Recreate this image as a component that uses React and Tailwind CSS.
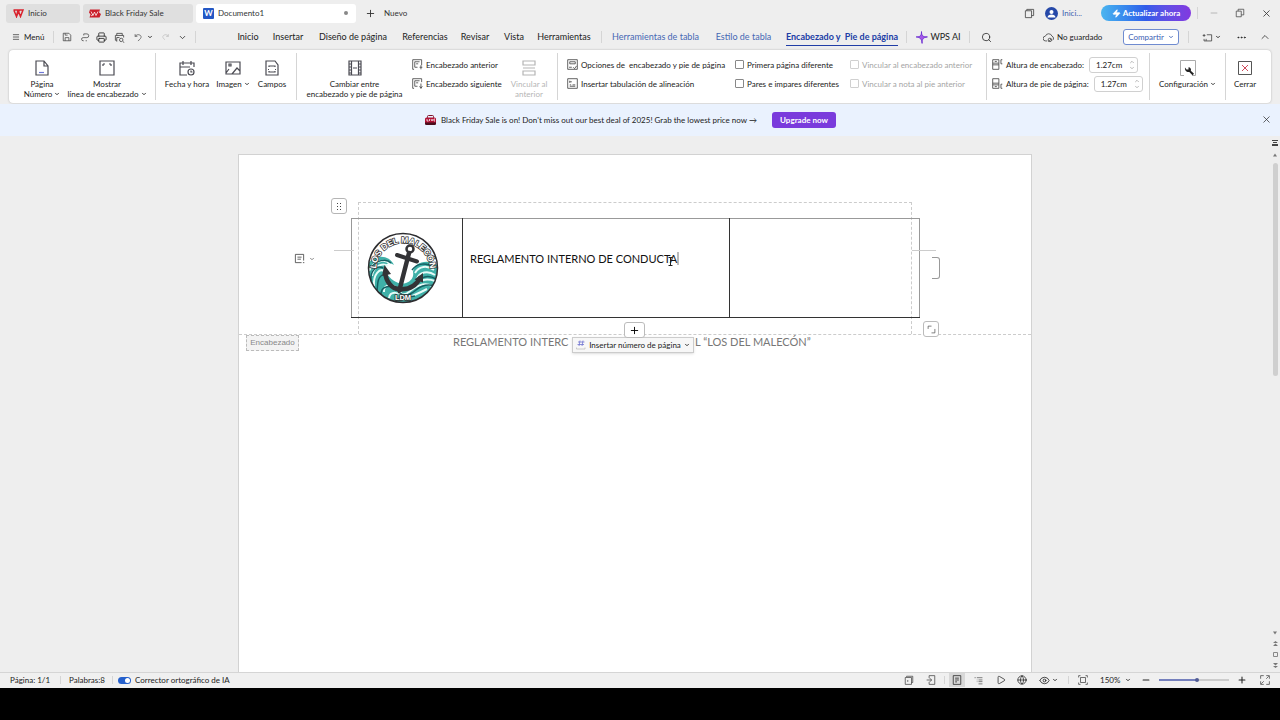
import { useState } from 'react';
import { Menu, Printer, ChevronDown, ChevronUp, Plus, Minus, X, Search, Play, Globe, Eye, Ellipsis, Zap } from 'lucide-react';

const paths = {
  save: 'M2 2h9l3 3v9H2zM5 14V9h6v5M5 2v3h4',
  exportPdf: 'M6 3h5a3 3 0 0 1 0 6H5a2.500 2.500 0 0 0 0 5h1M9 14h2M6 5.500V3',
  preview: 'M4 5V2h8v3M4 12H2V5h12v3M4 8h4M4 14V8M13 14l2 1.500M10.500 9a2.500 2.500 0 1 0 0 5 2.500 2.500 0 0 0 0-5',
  undo: 'M2 2v4h4M2 6c2-3 6-4 9-2s2 6-4 10',
  redo: 'M13 2v4H9M13 6C11 3 8 2 5 4S3 9 7 12',
  page: 'M2 1h8l4 5v9H2zM10 1v5h4',
  headerLine: 'M1 1h14v14H1zM4 4h2M10 4h2M4 6V4M12 6V4',
  calendar: 'M8 15H1V3h14v4M1 7h10M4 1v4M12 1v4M12 9a3 3 0 1 0 0 6 3 3 0 0 0 0-6M12 10.500V12h1.500',
  image: 'M1 2h14v12H1zM1 13l3-4M7 14l5-6 3 3M4 4h2v2H4z',
  field: 'M2 1h9l3 4v10H2zM5 7V6h6v1M5 11v1h6v-1M4 9.500h1M11 9.500h1',
  swap: 'M2 1h12v14H2zM4.500 1v14M11.500 1v14M2 4h2M2 7h2M2 10h2M2 13h2M12 4h2M12 7h2M12 10h2M12 13h2M6 8h4',
  link: 'M2 5V1h12v4zM2 8h12M2 11h12v4H2z',
  prev: 'M3 15H1V1h13v8M4 4h7M4 4v8h4M6 7h3M13 9v6M11 12h4',
  next: 'M3 15H1V1h13v5M4 4h7M4 4v8h4M6 7h3M13 8v7M11 12l2 3 2-3',
  options: 'M1 1h14v14H1zM4 4h8v3H4zM3 12h4M9 12l2 2 3-4',
  tabAlign: 'M1 1h14v14H1zM4 4v3M4 5.500h3M4 10h2M8 10h4M4 12h8',
  headHeight: 'M1 1h9v14H1zM1 6h9M4 3.500h3M1 8.500h9M15 1h-2v6h2',
  footHeight: 'M1 1h9v14H1zM1 10h9M4 12.500h3M1 7.500h9M15 9h-2v6h2',
  cloud: 'M6 13H4a3.500 3.500 0 0 1-.5-7A5 5 0 0 1 13 6a3.500 3.500 0 0 1 1 6M10 9a2 2 0 1 0 0 5 2 2 0 0 0 0-5M8 14l4-4',
  comment: 'M1 5h4M3 3v4M7 4h7v9H3v-3M6 10v3',
  window: 'M2 4h9v10H2zM4 4V2h10v9h-3',
  restore: 'M2 5h8v9H2zM5 5V2h9v9h-4',
  layout: 'M14 11V2H2v12h9M5 6h6M5 9h5M13 14h2',
  nav: 'M5 5V1h9v14H5v-4M1 8h8M6 5l3 3-3 3',
  book: 'M4 3V2h10v10h-2M2 4h10v11H2zM6 8v3',
  pageView: 'M2 1h12v14H2zM5 5h6M5 8h6M5 11h3',
  outline: 'M1 3h2M5 3h10M5 7h1M8 7h7M5 10h1M8 10h7M8 14h7',
  fit: 'M1 4V1h3M12 1h3v3M15 12v3h-3M4 15H1v-3M4 4h8v8H4z',
  expand: 'M1 6V1h5M10 1h5v5M15 10v5h-5M6 15H1v-5M2 14l4-4M10 6l4-4',
  corner: 'M2 7V2h6M14 7v7H8',
};

function Icon({ name, size = 12, className = 'text-[#444]' }) {
  return (
    <svg width={size} height={size} viewBox="0 0 16 16" fill="none" stroke="currentColor" strokeWidth="1.2" className={'shrink-0 ' + className}>
      <path d={paths[name]} />
    </svg>
  );
}

const Divider = ({ className = 'h-3' }) => <span className={'w-px shrink-0 bg-[#d5d5d5] ' + className} />;
const Caret = () => <ChevronDown size={6} strokeWidth={3.5} className="shrink-0" />;

const menuTabs = [
  { label: 'Inicio', width: 'w-[40px]' },
  { label: 'Insertar', width: 'w-[40px]' },
  { label: 'Diseño de página', width: 'w-[90px]' },
  { label: 'Referencias', width: 'w-[54px]' },
  { label: 'Revisar', width: 'w-[46px]' },
  { label: 'Vista', width: 'w-[32px]' },
  { label: 'Herramientas', width: 'w-[68px]' },
];

function TitleBar() {
  return (
    <header className="flex h-[26px] shrink-0 items-center pl-1.5 text-[#333]">
      <button className="mr-[3px] flex h-[19px] w-[74px] items-center gap-1 rounded-[3px] bg-[#dfdfdf] pl-[7px]">
        <svg width="11" height="9" viewBox="0 0 22 18" fill="none" stroke="#d9232e" strokeWidth="3"><path d="M1 2h9L7 15 2 3M10 2l5 13L20 2h-7l-6 13" /></svg>
        Inicio
      </button>
      <button className="mr-[3px] flex h-[19px] w-[110px] items-center gap-1 rounded-[3px] bg-[#dfdfdf] pl-1.5">
        <svg width="12" height="9" viewBox="0 0 24 18"><path d="M2 1h20l-2 6 4 3-3 7H1l2-6-3-4z" fill="#cb1f2b" /><path d="M4 5l4 8 3-7 3 7 4-8M4 14l4-3" fill="none" stroke="#fff" strokeWidth="1.5" /></svg>
        Black Friday Sale
      </button>
      <button className="flex h-[19px] w-[160px] items-center gap-1 rounded-[3px] bg-white pr-2 pl-[7px]">
        <span className="flex h-[11px] w-[11px] items-center justify-center rounded-[1px] bg-[#2458c5] text-[8px] font-bold text-white">W</span>
        Documento1
        <span className="ml-auto h-1 w-1 rounded-full bg-[#888]" />
      </button>
      <button className="ml-[9px] flex items-center gap-2"><Plus size={11} strokeWidth={2} />Nuevo</button>
      <div className="ml-auto flex items-center">
        <Icon name="window" size={11} />
        <button className="ml-[10px] flex w-[56px] items-center gap-1 text-[#3d62b0]">
          <svg width="13" height="13" viewBox="0 0 26 26"><circle cx="13" cy="13" r="13" fill="#2548a8" /><circle cx="13" cy="10" r="4" fill="#fff" /><path d="M5 21c0-8 16-8 16 0z" fill="#fff" /></svg>
          Inici...
        </button>
        <button className="flex h-4 w-[90px] items-center justify-center gap-0.5 rounded-full bg-linear-to-r from-[#4bb5ef] via-[#315be9] to-[#8238e0] font-bold text-white"><Zap size={9} fill="white" />Actualizar ahora</button>
        <span className="w-1.5" />
        <Divider />
        <button aria-label="Minimizar" className="flex w-8 justify-center text-[#999]"><Minus size={10} strokeWidth={1.5} /></button>
        <button aria-label="Restaurar" className="flex w-5 justify-center"><Icon name="restore" size={10} /></button>
        <button aria-label="Cerrar ventana" className="mr-[-3px] flex w-[33px] justify-center"><X size={11} strokeWidth={1.8} /></button>
      </div>
    </header>
  );
}

function MenuBar() {
  return (
    <nav className="flex h-6 shrink-0 items-center pb-0.5 pl-3 text-[9px] text-[#222]">
      <button className="flex w-[41px] items-center gap-1 text-[8px]"><Menu size={8} />Menú</button>
      <Divider />
      <div className="flex w-[141px] items-center pl-1">
        <button aria-label="Guardar" className="flex w-[18px] justify-center"><Icon name="save" size={10} /></button>
        <button aria-label="Exportar a PDF" className="flex w-[17px] justify-center"><Icon name="exportPdf" size={10} /></button>
        <button aria-label="Imprimir" className="flex w-[17px] justify-center"><Printer size={11} strokeWidth={1.8} /></button>
        <button aria-label="Vista previa" className="flex w-[18px] justify-center"><Icon name="preview" size={11} /></button>
        <button aria-label="Deshacer" className="flex w-[30px] items-center justify-center gap-1"><Icon name="undo" size={9} /><Caret /></button>
        <button aria-label="Rehacer" className="flex w-[14px] justify-center"><Icon name="redo" size={9} className="text-[#bbb]" /></button>
        <button aria-label="Más" className="flex w-5 justify-center"><ChevronDown size={9} strokeWidth={2} /></button>
      </div>
      <Divider />
      <div className="flex items-center pl-8">
        {menuTabs.map(t => (
          <button key={t.label} className={'flex justify-center ' + t.width}>{t.label}</button>
        ))}
      </div>
      <span className="w-[3px]" />
      <Divider />
      <button className="flex w-[107px] justify-center text-[#4668b4]">Herramientas de tabla</button>
      <button className="flex w-[69px] justify-center text-[#4668b4]">Estilo de tabla</button>
      <button className="relative flex h-full w-[128px] items-center justify-center font-bold whitespace-pre text-[#203da6]">
        Encabezado y  Pie de página
        <span className="absolute inset-x-2 bottom-[2px] h-px bg-[#203da6]" />
      </button>
      <Divider />
      <button className="flex w-[62px] items-center justify-center gap-0.5">
        <svg width="13" height="13" viewBox="0 0 22 22" className="shrink-0"><path d="M11 1c0 7 2 9 10 9-7 1-9 3-9 11-1-8-3-10-10-11 7 0 9-2 9-9z" fill="#a557e8" stroke="#6a2fd0" strokeWidth="1.5" /></svg>
        WPS AI
      </button>
      <Divider />
      <button aria-label="Buscar" className="flex w-8 justify-center"><Search size={11} strokeWidth={1.7} /></button>
      <div className="ml-auto flex items-center text-[8px]">
        <button className="flex w-[80px] items-center gap-[3px]"><Icon name="cloud" size={11} />No guardado</button>
        <button className="flex h-4 w-[56px] items-center justify-center gap-1 rounded-[3px] border border-[#6f8bd0] bg-white text-[#3b60b4]">Compartir<Caret /></button>
        <span className="w-[9px]" />
        <Divider />
        <button aria-label="Comentarios" className="flex w-[45px] items-center justify-center gap-0.5"><Icon name="comment" size={11} /><Caret /></button>
        <button aria-label="Más opciones" className="flex w-[15px] justify-center"><Ellipsis size={11} /></button>
        <button aria-label="Ocultar cinta" className="flex w-[31px] justify-center"><ChevronUp size={12} strokeWidth={1.5} /></button>
      </div>
    </nav>
  );
}

function BigButton({ icon, lines, width, caret, disabled, children }) {
  return (
    <button disabled={disabled} className={'flex shrink-0 flex-col items-center pt-[10px] leading-[10px] ' + width + (disabled ? ' text-[#b5b5b5]' : '')}>
      {children || <Icon name={icon} size={16} className={disabled ? 'text-[#b5b5b5]' : 'text-[#4a4a52]'} />}
      <span className="mt-[3px] flex flex-col items-center">
        {lines.map((l, i) => (
          <span key={l} className="flex items-center gap-0.5 whitespace-nowrap">{l}{caret && i === lines.length - 1 && <Caret />}</span>
        ))}
      </span>
    </button>
  );
}

const RowButton = ({ icon, label }) => (
  <button className="flex h-[19px] items-center gap-[3px] whitespace-pre"><Icon name={icon} size={11} />{label}</button>
);

const Check = ({ label, disabled }) => (
  <label className={'flex h-[19px] items-center gap-[3px] ' + (disabled ? 'text-[#a5a5a5]' : '')}>
    <input type="checkbox" disabled={disabled} className="h-[9px] w-[9px] shrink-0 appearance-none rounded-[1px] border border-[#888] bg-white disabled:border-[#d0d0d0]" />
    {label}
  </label>
);

function HeightField({ id, icon, label }) {
  const [value, setValue] = useState('1.27cm');
  return (
    <div className="flex h-[19px] items-center">
      <Icon name={icon} size={11} />
      <label htmlFor={id} className="mr-[5px] ml-[3px]">{label}</label>
      <span className="flex h-4 w-[49px] items-center rounded-[3px] border border-[#d0d0d0] bg-white">
        <input id={id} value={value} onChange={e => setValue(e.target.value)} className="w-[39px] pl-1.5 outline-none" />
        <span className="flex flex-col text-[#777]"><ChevronUp size={6} /><ChevronDown size={6} /></span>
      </span>
    </div>
  );
}

function Ribbon() {
  return (
    <section className="mr-[9px] ml-[9px] flex h-[53px] shrink-0 rounded-[4px] bg-white text-[#222] shadow-[0_0_2px_#aaa]">
      <BigButton width="w-[66px]" lines={['Página', 'Número']} caret>
        <svg width="16" height="16" viewBox="0 0 16 16" fill="none" stroke="#4a4a52" strokeWidth="1.2"><path d={paths.page} /><path d="M5 12.500h5" stroke="#6d77d8" /></svg>
      </BigButton>
      <BigButton width="w-[64px]" icon="headerLine" lines={['Mostrar', 'línea de encabezado']} caret />
      <span className="w-4" />
      <Divider className="my-[3px]" />
      <BigButton width="w-[62px]" icon="calendar" lines={['Fecha y hora']} />
      <BigButton width="w-[30px]" lines={['Imagen']} caret icon="image" />
      <BigButton width="w-[48px]" icon="field" lines={['Campos']} />
      <Divider className="my-[3px]" />
      <BigButton width="w-[115px]" icon="swap" lines={['Cambiar entre', 'encabezado y pie de página']} />
      <div className="w-[91px] shrink-0 pt-[5px]">
        <RowButton icon="prev" label="Encabezado anterior" />
        <RowButton icon="next" label="Encabezado siguiente" />
      </div>
      <BigButton width="w-[52px]" icon="link" lines={['Vincular al', 'anterior']} disabled />
      <Divider className="my-[3px] ml-0.5" />
      <div className="w-[177px] shrink-0 pt-[5px] pl-[9px]">
        <RowButton icon="options" label="Opciones de  encabezado y pie de página" />
        <RowButton icon="tabAlign" label="Insertar tabulación de alineación" />
      </div>
      <div className="w-[115px] shrink-0 pt-[5px]">
        <Check label="Primera página diferente" />
        <Check label="Pares e impares diferentes" />
      </div>
      <div className="w-[136px] shrink-0 pt-[5px]">
        <Check label="Vincular al encabezado anterior" disabled />
        <Check label="Vincular a nota al pie anterior" disabled />
      </div>
      <Divider className="my-[3px]" />
      <div className="w-[162px] shrink-0 pt-[5px] pl-[5px]">
        <HeightField id="header-height" icon="headHeight" label="Altura de encabezado:" />
        <HeightField id="footer-height" icon="footHeight" label="Altura de pie de página:" />
      </div>
      <Divider className="my-[3px]" />
      <BigButton width="w-[75px]" lines={['Configuración']} caret>
        <svg width="16" height="16" viewBox="0 0 16 16" fill="none" stroke="#aaa"><path d="M4 15.500H.5V.5h15v15H12" /><path d="M5 7.500l1.500 2h2V7.200c2 0 3 2 2.300 3.500l3.200 3-1.500 1.500-3.200-3.200C6.500 12.500 4.500 10 5 7.500z" fill="#222" stroke="none" /></svg>
      </BigButton>
      <Divider className="my-[3px]" />
      <BigButton width="w-[38px]" lines={['Cerrar']}>
        <svg width="16" height="16" viewBox="0 0 16 16" fill="none" stroke="#555"><path d="M1.500 1.500h13v13h-13z" /><path d="M5 5l6 6M11 5l-6 6" stroke="#d04a5c" /></svg>
      </BigButton>
    </section>
  );
}

function Banner() {
  return (
    <section className="mt-px flex h-8 shrink-0 items-center bg-[#eaf2fe] pr-2 pb-px text-[#222]">
      <div className="flex flex-1 items-center justify-center">
        <svg width="11" height="10" viewBox="0 0 22 20" className="mr-[5px]"><rect x="5" y="1" width="12" height="6" rx="2" fill="none" stroke="#7d1229" strokeWidth="2" /><rect y="5" width="22" height="14" rx="3" fill="#b01235" /><path d="M0 15h22v2q0 3-3 3H3q-3 0-3-3z" fill="#4a0d1c" /><path d="M4 8v4h3M9 8v4M12 8l2 4 2-4M20 8h-2v4h2" stroke="#fff" strokeWidth="1.500" fill="none" /></svg>
        <a href="#sale">Black Friday Sale is on! Don't miss out our best deal of 2025! Grab the lowest price now →</a>
        <button className="ml-[15px] h-4 w-16 rounded-[3px] bg-[#7a3bdc] font-bold text-white">Upgrade now</button>
      </div>
      <button aria-label="Cerrar aviso"><X size={11} strokeWidth={1.5} /></button>
    </section>
  );
}

function Logo() {
  return (
    <svg width="72" height="72" viewBox="0 0 144 144" className="ml-[15px]">
      <defs>
        <path id="arcTop" d="M18 76a54 54 0 0 1 108 0" />
        <clipPath id="disc"><circle cx="72" cy="72" r="69" /></clipPath>
      </defs>
      <circle cx="72" cy="72" r="69" fill="#fff" />
      <g clipPath="url(#disc)">
        <path d="M0 66C14 44 44 44 54 66c-14-8-22 2-16 14 10 18 26 26 40 22 12-4 16-14 14-22 2-20 30-28 52-12v76H0z" fill="#3fb0a8" />
        <path d="M4 78c8-20 32-26 42-14M10 88c2-22 24-26 32-20M14 108c-2-24 12-36 20-30M96 82c8-14 24-16 38-6M100 94c4-14 22-18 36-8M92 108c14-14 28-16 44-10M34 120c-2-18 20-16 26-6s14 14 24 6 28-22 46-12M44 132c2-16 22-10 30-4s26-4 46-14" fill="none" stroke="#e6fbf8" strokeWidth="4" />
        <path d="M8 72c10-16 30-20 40-10M8 98c-2-22 12-32 24-26M20 118c2-16 0-24 10-32M90 76c10-14 28-16 46-4M98 102c12-14 26-16 40-8M28 128c-2-22 22-24 34-10s24 8 36-2 24-12 38-8M58 138c8-12 24-6 38-10" fill="none" stroke="#135f62" strokeWidth="3" />
      </g>
      <g fill="none" stroke="#333336" strokeLinecap="round">
        <circle cx="86" cy="34" r="7" strokeWidth="5" />
        <path d="M84 42L66 112" strokeWidth="9" />
        <path d="M60 46l40 13" strokeWidth="8" />
        <path d="M36 80c2 20 14 34 28 34 20 2 34-6 42-22" strokeWidth="9" />
      </g>
      <path d="M30 88l5-22 13 18zM95 95l17-13 0 19zM55 108l8 15 14-9z" fill="#333336" />
      <text fontFamily="Liberation Sans, sans-serif" fontSize="17" fontWeight="700" fill="#fff" stroke="#333" strokeWidth="3" paintOrder="stroke" textAnchor="middle">
        <textPath href="#arcTop" startOffset="50%">LOS DEL MALECÓN</textPath>
      </text>
      <text x="72" y="136" fontFamily="Liberation Sans, sans-serif" fontSize="15" fontWeight="700" fill="#fff" stroke="#333" strokeWidth="3" paintOrder="stroke" textAnchor="middle">LDM</text>
      <circle cx="72" cy="72" r="69" fill="none" stroke="#2d2d30" strokeWidth="3" />
    </svg>
  );
}

function Page() {
  return (
    <main className="w-[794px] max-w-full border border-b-0 border-[#d2d2d2] bg-white">
      <div className="relative h-[180px] border-b border-dashed border-[#ccc] px-[119px] pt-[47px]">
        <div className="h-full border border-b-0 border-dashed border-[#ccc] pt-[15px]">
          <table className="-ml-2 w-[569px] table-fixed border-collapse border border-[#999] border-b-[#333] text-[11px] text-[#111]">
            <tbody>
              <tr className="h-[99px]">
                <td className="w-[111px] p-0"><Logo /></td>
                <td className="w-[267px] border-x border-[#333] p-0 pb-[18px] pl-[7px]">
                  <span className="border-r-2 border-[#bbb]">REGLAMENTO INTERNO DE CONDUCTA</span>
                </td>
                <td />
              </tr>
            </tbody>
          </table>
        </div>
        <button aria-label="Mover tabla" className="absolute top-[43px] left-[92px] grid h-4 w-4 place-content-center rounded-[3px] border border-[#b5b5b5] bg-white">
          <svg width="5" height="7" viewBox="0 0 5 7" fill="#444"><path d="M0 0h1v1H0zM3 0h1v1H3zM0 3h1v1H0zM3 3h1v1H3zM0 6h1v1H0zM3 6h1v1H3z" /></svg>
        </button>
        <button aria-label="Opciones de párrafo" className="absolute top-[98px] left-[55px] flex items-center gap-1 text-[#777]"><Icon name="layout" size={11} /><Caret /></button>
        <span className="absolute top-[95px] left-[95px] h-px w-5 bg-[#ccc]" />
        <span className="absolute top-[95px] left-[673px] h-px w-6 bg-[#ccc]" />
        <button aria-label="Añadir columna" className="absolute top-[102px] left-[693px] h-[22px] w-2 rounded-r-[3px] border border-l-0 border-[#999] bg-white" />
        <button aria-label="Añadir fila" className="absolute top-[167px] left-[385px] grid h-4 w-[21px] place-content-center rounded-[3px] border border-[#bbb] bg-white"><Plus size={11} strokeWidth={2} /></button>
        <button aria-label="Cambiar tamaño" className="absolute top-[166px] left-[684px] grid h-4 w-4 place-content-center rounded-[3px] border border-[#bbb] bg-white"><Icon name="corner" size={9} /></button>
        <svg width="5" height="9" viewBox="0 0 5 9" fill="none" stroke="#222" className="absolute top-[102px] left-[429px]"><path d="M.5.500h4M2.500.500v8M.5 8.500h4" /></svg>
      </div>
      <div className="flex items-start pl-[7px]">
        <span className="flex h-4 w-[53px] items-center justify-center border border-dashed border-[#bbb] bg-[#f3f3f3] font-['Liberation_Sans',sans-serif] text-[8px] text-[#888]">Encabezado</span>
        <div className="ml-[154px] flex items-start text-[11px] leading-[14px] whitespace-nowrap text-[#777]">
          <span className="w-[119px]">REGLAMENTO INTERC</span>
          <button className="mt-0.5 mr-px flex h-4 w-[122px] items-center justify-center gap-[3px] border border-[#ccc] bg-[#f7f7f7] text-[8px] text-[#222] shadow-sm">
            <svg width="10" height="10" viewBox="0 0 20 20" fill="none" stroke="#6b6fd0" strokeWidth="1.5"><path d="M8 1L6 12M14 1l-2 11M4 4h13M3 9h13" /><path d="M1 15v3h17v-3" stroke="#bbb" /></svg>
            Insertar número de página
            <Caret />
          </button>
          <span>L “LOS DEL MALECÓN”</span>
        </div>
      </div>
    </main>
  );
}

function ScrollRail() {
  return (
    <aside className="flex w-[10px] shrink-0 flex-col items-center py-1 text-[#555]">
      <svg width="6" height="6" viewBox="0 0 6 6" fill="#444"><path d="M0 0h6v1H0zM1 2h4v1H1zM0 4h6v2H0z" /></svg>
      <svg width="4" height="4" viewBox="0 0 5 4" fill="#777" className="mt-[7px]"><path d="M0 4h5L2.500 0z" /></svg>
      <span className="mt-1.5 h-[213px] w-[5px] rounded-full bg-[#cfcfcf]" />
      <div className="mt-auto flex flex-col items-center gap-[6px]">
        <svg width="4" height="4" viewBox="0 0 5 4" fill="#777"><path d="M0 0h5L2.500 4z" /></svg>
        <svg width="5" height="5" viewBox="0 0 5 5" fill="#777"><path d="M0 2h5L2.500 0zM0 5h5L2.500 2.500z" /></svg>
        <svg width="5" height="5" viewBox="0 0 5 5" fill="none" stroke="#888"><path d="M.5.500h4v4h-4z" /></svg>
        <svg width="5" height="5" viewBox="0 0 5 5" fill="#777"><path d="M0 0h5L2.500 2.500zM0 3h5L2.500 5z" /></svg>
      </div>
    </aside>
  );
}

function StatusBar() {
  const [zoom, setZoom] = useState(54);
  return (
    <footer className="flex h-4 shrink-0 items-center border-t border-[#d5d5d5] bg-[#f0f0f0] pb-px pl-[10px] text-[#222]">
      <span className="w-[50px]">Página: 1/1</span>
      <Divider className="h-2" />
      <span className="w-[51px] pl-2">Palabras:8</span>
      <Divider className="h-2" />
      <label className="flex items-center gap-1 pl-[5px]">
        <input type="checkbox" role="switch" defaultChecked className="relative h-[7px] w-[13px] appearance-none rounded-full bg-[#2560cc] after:absolute after:top-px after:right-px after:h-[5px] after:w-[5px] after:rounded-full after:bg-white" />
        Corrector ortográfico de IA
      </label>
      <div className="ml-auto flex h-full items-center">
        <button aria-label="Notas" className="flex w-[22px] justify-center"><Icon name="book" size={10} /></button>
        <button aria-label="Panel" className="flex w-[22px] justify-center"><Icon name="nav" size={10} /></button>
        <Divider className="mr-1 ml-0.5 h-2" />
        <button aria-label="Vista de página" className="flex h-full w-4 items-center justify-center bg-[#d8d8d8]"><Icon name="pageView" size={10} className="text-[#222]" /></button>
        <button aria-label="Esquema" className="flex w-[27px] justify-center"><Icon name="outline" size={9} /></button>
        <button aria-label="Presentación" className="flex w-[18px] justify-center"><Play size={10} strokeWidth={1.8} /></button>
        <button aria-label="Vista web" className="flex w-[23px] justify-center"><Globe size={10} strokeWidth={1.8} /></button>
        <button aria-label="Protección ocular" className="flex w-[31px] items-center justify-center gap-0.5"><Eye size={11} strokeWidth={1.8} /><Caret /></button>
        <Divider className="ml-1 h-2" />
        <button aria-label="Ajustar" className="flex w-[27px] justify-center"><Icon name="fit" size={10} /></button>
        <label className="mr-0.5 flex items-center pl-1">
          <select aria-label="Zoom" className="w-[25px] appearance-none bg-transparent"><option>150%</option></select>
          <Caret />
        </label>
        <button aria-label="Alejar" className="flex w-[26px] justify-center"><Minus size={10} strokeWidth={2.5} /></button>
        <input type="range" aria-label="Nivel de zoom" value={zoom} onChange={e => setZoom(e.target.value)} className="h-0.5 w-[70px] appearance-none bg-[linear-gradient(90deg,#7580bd_54%,#cccccc_54%)] [&::-webkit-slider-thumb]:h-1 [&::-webkit-slider-thumb]:w-1 [&::-webkit-slider-thumb]:appearance-none [&::-webkit-slider-thumb]:rounded-full [&::-webkit-slider-thumb]:bg-[#505b94]" />
        <button aria-label="Acercar" className="flex w-[26px] justify-center"><Plus size={10} strokeWidth={2.5} /></button>
        <button aria-label="Pantalla completa" className="flex w-[19px] justify-center"><Icon name="expand" size={10} /></button>
        <span className="w-1.5" />
      </div>
    </footer>
  );
}

export default function App() {
  return (
    <div className="flex h-screen flex-col overflow-hidden bg-[#eeeeee] font-[Lato,sans-serif] text-[8px] leading-3 whitespace-nowrap">
      <TitleBar />
      <MenuBar />
      <Ribbon />
      <Banner />
      <div className="flex min-h-0 flex-1">
        <div className="flex min-w-0 flex-1 justify-center overflow-hidden pt-[18px]"><Page /></div>
        <ScrollRail />
      </div>
      <StatusBar />
      <div className="h-8 shrink-0 bg-black" />
    </div>
  );
}
